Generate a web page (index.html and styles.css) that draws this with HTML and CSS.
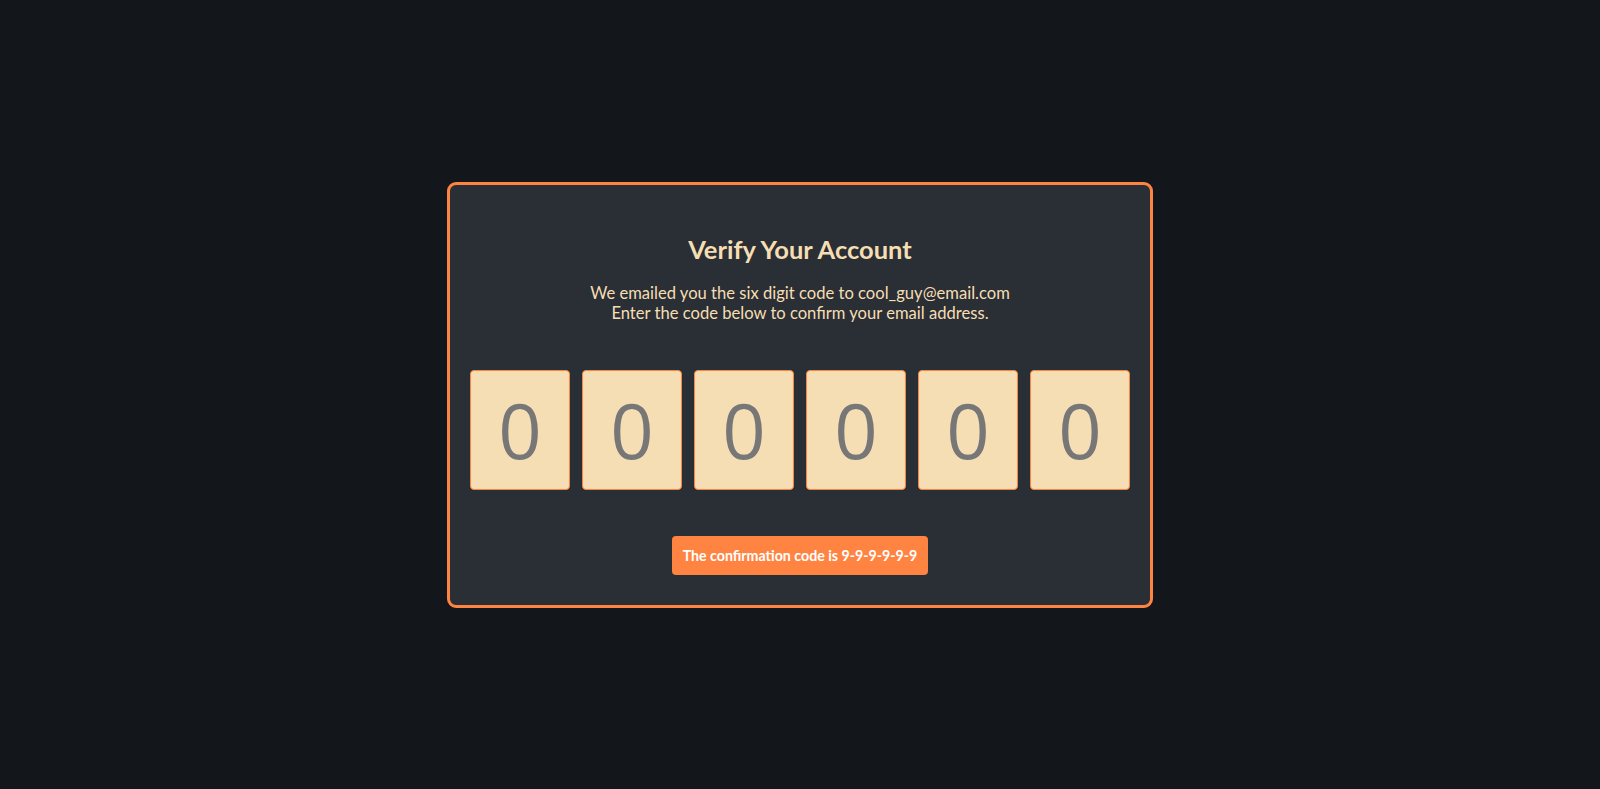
FILE: index.html
```html
<!DOCTYPE html>
<html lang="en">
<head>
<meta charset="utf-8">
<title>Verify Your Account</title>
<link rel="stylesheet" href="styles.css">
</head>
<body>
<main class="page">
  <section class="card">
    <h1 class="title">Verify Your Account</h1>
    <p class="info">We emailed you the six digit code to cool_guy@email.com<br>Enter the code below to confirm your email address.</p>
    <div class="code">
      <input class="digit" type="text" placeholder="0" maxlength="1">
      <input class="digit" type="text" placeholder="0" maxlength="1">
      <input class="digit" type="text" placeholder="0" maxlength="1">
      <input class="digit" type="text" placeholder="0" maxlength="1">
      <input class="digit" type="text" placeholder="0" maxlength="1">
      <input class="digit" type="text" placeholder="0" maxlength="1">
    </div>
    <div class="hint">The confirmation code is 9-9-9-9-9-9</div>
  </section>
</main>
</body>
</html>
```

FILE: styles.css
```css
* { box-sizing: border-box; }
html, body { margin: 0; height: 100%; }
body {
  background: #13171b;
  font-family: Lato, "Open Sans", sans-serif;
}
.page {
  height: 100%;
  display: flex;
  align-items: center;
  justify-content: center;
}
.card {
  width: 706px;
  height: 426px;
  border: 3px solid #ff8442;
  border-radius: 9px;
  background: #2a2e35;
  padding: 49px 20px 0;
  display: flex;
  flex-direction: column;
  align-items: center;
}
.title {
  margin: 0;
  color: #f5deb3;
  font-size: 25.5px;
  font-weight: 700;
  line-height: 30px;
}
.info {
  margin: 19px 0 0;
  color: #f5deb3;
  font-size: 16.6px;
  line-height: 20px;
  text-align: center;
}
.code {
  margin-top: 47px;
  display: flex;
  gap: 12px;
}
.digit {
  width: 100px;
  height: 120px;
  border: 1px solid #ff8442;
  border-radius: 4px;
  background: #f5deb3;
  color: #777;
  font-family: "Open Sans", sans-serif;
  font-size: 76px;
  text-align: center;
  padding: 0;
  outline: none;
}
.digit::placeholder { color: #777; opacity: 1; }
.hint {
  margin-top: 46px;
  width: 256px;
  height: 39px;
  display: flex;
  align-items: center;
  justify-content: center;
  background: #ff8442;
  color: #fff;
  border-radius: 4px;
  font-size: 14.2px;
  font-weight: 700;
}
```
